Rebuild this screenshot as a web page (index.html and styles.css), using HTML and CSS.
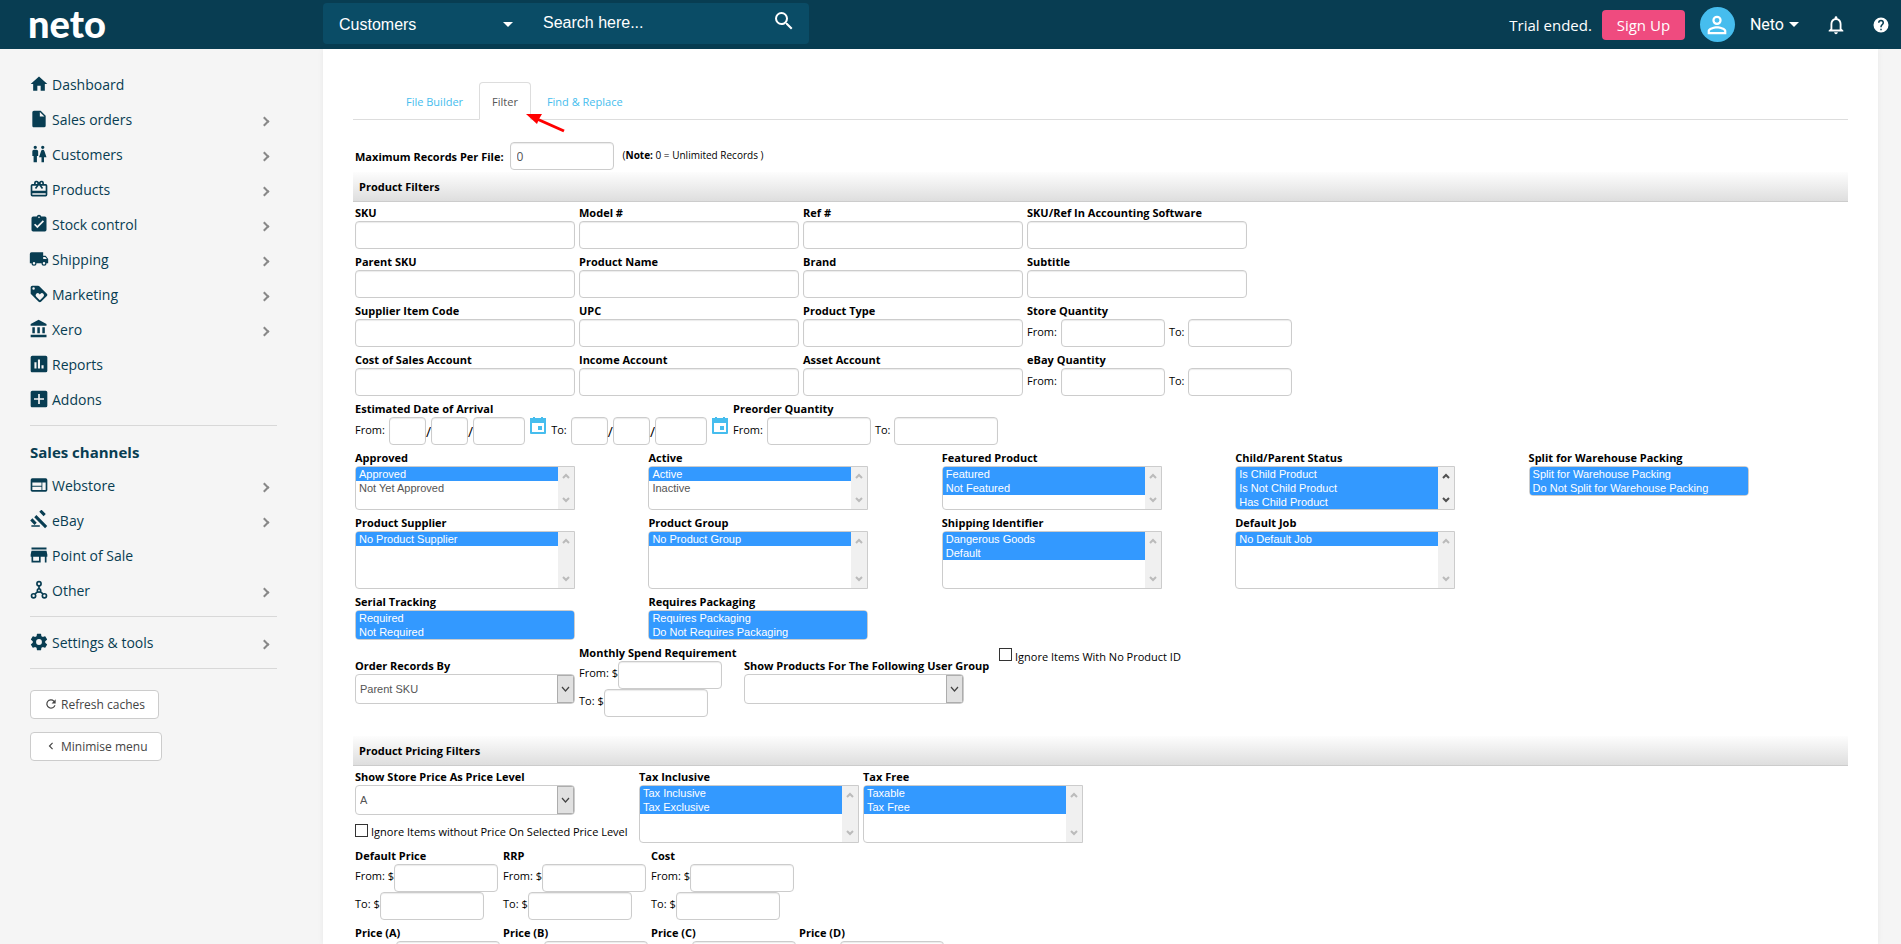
FILE: index.html
```
<!DOCTYPE html>
<html lang="en">
<head>
  <meta charset="UTF-8">
  <title>Neto</title>
  <link rel="stylesheet" href="styles.css">
</head>
<body>
<div class="page">
  <header class="topbar">
    <a class="logo" href="#">neto</a>
    <form class="search">
      <select class="search-type" aria-label="Search in"><option>Customers</option></select>
      <input class="search-text" type="search" placeholder="Search here..." aria-label="Search">
      <button class="search-btn" type="button" aria-label="Search">
        <svg width="24" height="24" viewBox="0 0 24 24"><path d="M15.5 14h-.79l-.28-.27A6.47 6.47 0 0 0 16 9.5 6.5 6.5 0 1 0 9.5 16c1.61 0 3.09-.59 4.23-1.57l.27.28v.79l5 4.99L20.49 19l-4.99-5zm-6 0C7.01 14 5 11.99 5 9.5S7.01 5 9.5 5 14 7.01 14 9.5 11.99 14 9.5 14z"/></svg>
      </button>
    </form>
    <div class="account">
      <span class="trial">Trial ended.</span>
      <button class="signup" type="button">Sign Up</button>
      <span class="avatar"><svg width="28" height="28" viewBox="0 0 24 24"><path d="M12 5.900a2.100 2.100 0 1 1 0 4.200 2.100 2.100 0 0 1 0-4.200m0 9c2.970 0 6.100 1.460 6.100 2.100v1.100H5.900V17c0-.64 3.130-2.100 6.100-2.100M12 4a4 4 0 1 0 0 8 4 4 0 0 0 0-8zm0 9c-2.670 0-8 1.340-8 4v3h16v-3c0-2.660-5.330-4-8-4z"/></svg></span>
      <button class="user" type="button">Neto <span class="caret"></span></button>
      <button class="icon-btn bell" type="button" aria-label="Notifications"><svg width="22" height="22" viewBox="0 0 24 24"><path d="M12 22c1.100 0 2-.9 2-2h-4c0 1.100.9 2 2 2zm6-6v-5c0-3.070-1.630-5.640-4.500-6.320V4a1.500 1.500 0 0 0-3 0v.68C7.640 5.360 6 7.920 6 11v5l-2 2v1h16v-1l-2-2zm-2 1H8v-6c0-2.480 1.510-4.500 4-4.500s4 2.020 4 4.500v6z"/></svg></button>
      <button class="icon-btn" type="button" aria-label="Help"><svg width="18" height="18" viewBox="0 0 24 24"><path d="M12 2a10 10 0 1 0 0 20 10 10 0 0 0 0-20zm1 17h-2v-2h2v2zm2.070-7.750-.9.92C13.450 12.900 13 13.500 13 15h-2v-.5c0-1.100.45-2.100 1.170-2.830l1.240-1.260c.37-.36.59-.86.59-1.410a2 2 0 0 0-4 0H8a4 4 0 0 1 8 0c0 .88-.36 1.680-.93 2.250z"/></svg></button>
    </div>
  </header>

  <div class="body">
    <nav class="sidebar">
      <a class="item" href="#"><svg viewBox="0 0 24 24"><path d="M10 20v-6h4v6h5v-8h3L12 3 2 12h3v8z"/></svg>Dashboard</a>
      <a class="item more" href="#"><svg viewBox="0 0 24 24"><path d="M6 2a2 2 0 0 0-2 2v16c0 1.100.9 2 2 2h12a2 2 0 0 0 2-2V8l-6-6H6zm7 7V3.500L18.500 9H13z"/></svg>Sales orders</a>
      <a class="item more" href="#"><svg viewBox="0 0 24 24"><path d="M5.500 22v-7.500H4V9c0-1.100.9-2 2-2h3c1.100 0 2 .9 2 2v5.500H9.500V22h-4zM18 22v-6h3l-2.540-7.630A2.010 2.010 0 0 0 16.560 7h-.12a2 2 0 0 0-1.900 1.370L12 16h3v6h3zM7.500 6a2 2 0 1 0 0-4 2 2 0 0 0 0 4zm9 0a2 2 0 1 0 0-4 2 2 0 0 0 0 4z"/></svg>Customers</a>
      <a class="item more" href="#"><svg viewBox="0 0 24 24"><path d="M20 6h-2.180c.11-.31.18-.65.18-1a3 3 0 0 0-5.500-1.650l-.5.67-.5-.68A3 3 0 0 0 6 5c0 .35.070.69.180 1H4a2 2 0 0 0-1.990 2L2 19a2 2 0 0 0 2 2h16a2 2 0 0 0 2-2V8a2 2 0 0 0-2-2zm-5-2a1 1 0 1 1 0 2 1 1 0 0 1 0-2zM9 4a1 1 0 1 1 0 2 1 1 0 0 1 0-2zm11 15H4v-2h16v2zm0-5H4V8h5.080L7 10.830 8.620 12 11 8.760l1-1.360 1 1.360L15.380 12 17 10.830 14.920 8H20v6z"/></svg>Products</a>
      <a class="item more" href="#"><svg viewBox="0 0 24 24"><path d="M19 3h-4.180a3 3 0 0 0-5.640 0H5a2 2 0 0 0-2 2v14c0 1.100.9 2 2 2h14a2 2 0 0 0 2-2V5a2 2 0 0 0-2-2zm-7 0a1 1 0 1 1 0 2 1 1 0 0 1 0-2zm-2 14-4-4 1.410-1.410L10 14.170l6.590-6.590L18 9l-8 8z"/></svg>Stock control</a>
      <a class="item more" href="#"><svg viewBox="0 0 24 24"><path d="M20 8h-3V4H3a2 2 0 0 0-2 2v11h2a3 3 0 0 0 6 0h6a3 3 0 0 0 6 0h2v-5l-3-4zM6 18.500a1.500 1.500 0 1 1 0-3 1.500 1.500 0 0 1 0 3zm13.500-9 1.960 2.500H17V9.500h2.500zm-1.500 9a1.500 1.500 0 1 1 0-3 1.500 1.500 0 0 1 0 3z"/></svg>Shipping</a>
      <a class="item more" href="#"><svg viewBox="0 0 24 24"><path d="m21.410 11.580-9-9A2 2 0 0 0 11 2H4a2 2 0 0 0-2 2v7c0 .55.220 1.050.590 1.420l9 9c.36.36.86.58 1.410.58s1.050-.22 1.410-.59l7-7c.37-.36.59-.86.59-1.410s-.23-1.060-.59-1.420zM5.500 7a1.500 1.500 0 1 1 0-3 1.500 1.500 0 0 1 0 3zm11.770 8.270L13 19.540l-4.270-4.270a2.500 2.500 0 0 1 3.540-3.540l.73.740.73-.73a2.500 2.500 0 0 1 3.540 3.530z"/></svg>Marketing</a>
      <a class="item more" href="#"><svg viewBox="0 0 24 24"><path d="M4 10v7h3v-7H4zm6 0v7h3v-7h-3zM2 22h19v-3H2v3zm14-12v7h3v-7h-3zm-4.500-9L2 6v2h19V6l-9.500-5z"/></svg>Xero</a>
      <a class="item" href="#"><svg viewBox="0 0 24 24"><path d="M20 2H4a2 2 0 0 0-2 2v16c0 1.100.9 2 2 2h16a2 2 0 0 0 2-2V4a2 2 0 0 0-2-2zM9 17.500H6.500V10H9v7.500zm4.200 0h-2.500V6.500h2.500v11zm4.300 0H15v-4h2.500v4z"/></svg>Reports</a>
      <a class="item" href="#"><svg viewBox="0 0 24 24"><path d="M20 2H4a2 2 0 0 0-2 2v16c0 1.100.9 2 2 2h16a2 2 0 0 0 2-2V4a2 2 0 0 0-2-2zm-2 11h-5v5h-2v-5H6v-2h5V6h2v5h5v2z"/></svg>Addons</a>
      <hr>
      <h2>Sales channels</h2>
      <a class="item more" href="#"><svg viewBox="0 0 24 24"><path d="M20 4H4a2 2 0 0 0-1.990 2L2 18c0 1.100.9 2 2 2h16a2 2 0 0 0 2-2V6a2 2 0 0 0-2-2zm-5 14H4v-4h11v4zm0-5H4V9h11v4zm5 5h-4V9h4v9z"/></svg>Webstore</a>
      <a class="item more" href="#"><svg viewBox="0 0 24 24"><path d="M2 21h11v2H2zM5.740 10.600l2.830-2.830L22.700 21.920l-2.830 2.830zM12.310 3.510l2.830-2.830 5.660 5.660-2.830 2.830zM3.330 12l5.660 5.660-2.830 2.830L.5 14.830z" transform="translate(1 -1) scale(.92)"/></svg>eBay</a>
      <a class="item" href="#"><svg viewBox="0 0 24 24"><path d="M21 3H3v2.500h18V3zm1 11v-2.500L21 7H3l-1 4.500V14h1v7h11v-7h5v7h2v-7h1zm-10 5H5v-5h7v5z"/></svg>Point of Sale</a>
      <a class="item more" href="#"><svg viewBox="0 0 24 24"><g fill="none" stroke="#083d52" stroke-width="2"><circle cx="12" cy="4.500" r="2.500"/><circle cx="5.500" cy="19" r="2.500"/><circle cx="18.500" cy="19" r="2.500"/><circle cx="12" cy="12.500" r="2"/><path d="M12 7v4M10.500 14l-3.500 3M13.500 14l3.500 3"/></g></svg>Other</a>
      <hr>
      <a class="item more" href="#"><svg viewBox="0 0 24 24"><path d="M19.430 12.980c.040-.32.070-.64.070-.98s-.03-.66-.07-.98l2.110-1.650c.19-.15.24-.42.120-.64l-2-3.460a.5.500 0 0 0-.61-.22l-2.490 1a7.300 7.300 0 0 0-1.690-.98l-.38-2.650A.49.490 0 0 0 14 2h-4a.49.490 0 0 0-.49.420l-.38 2.650c-.61.250-1.170.59-1.690.98l-2.490-1a.5.500 0 0 0-.61.220l-2 3.460c-.13.220-.07.490.120.640l2.110 1.650c-.04.320-.07.650-.07.980s.030.660.070.980l-2.110 1.650a.5.500 0 0 0-.12.640l2 3.460c.12.220.390.300.610.220l2.490-1c.52.400 1.080.730 1.690.980l.38 2.650c.030.240.240.420.490.420h4c.25 0 .46-.18.490-.42l.38-2.650a7.700 7.700 0 0 0 1.690-.98l2.490 1c.23.090.49 0 .61-.22l2-3.460a.5.500 0 0 0-.12-.64l-2.110-1.650zM12 15.500a3.500 3.500 0 1 1 0-7 3.500 3.500 0 0 1 0 7z"/></svg>Settings &amp; tools</a>
      <hr>
      <button class="side-btn" type="button"><svg viewBox="0 0 24 24"><path d="M17.650 6.350A8 8 0 1 0 19.730 14h-2.080A6 6 0 1 1 12 6c1.660 0 3.140.69 4.220 1.780L13 11h7V4l-2.350 2.350z"/></svg>Refresh caches</button>
      <button class="side-btn" type="button"><svg viewBox="0 0 24 24"><path d="M15.410 7.410 14 6l-6 6 6 6 1.410-1.410L10.830 12z"/></svg>Minimise menu</button>
    </nav>

    <main class="content">
      <ul class="tabs">
        <li><a href="#">File Builder</a></li>
        <li><a class="active" href="#">Filter</a></li>
        <li><a href="#">Find &amp; Replace</a></li>
      </ul>
      <svg class="pointer" width="40" height="20" viewBox="0 0 40 20"><path d="M11 5 38 17" stroke="#f00" stroke-width="3"/><path d="M0 0h16l-3 5-2 5z" fill="#f00"/></svg>

      <div class="max-row">
        <label class="bold" for="max">Maximum Records Per File:</label>
        <input id="max" class="num" type="text" value="0">
        <small>(<b>Note:</b> 0 = Unlimited Records )</small>
      </div>

      <h3 class="bar">Product Filters</h3>
      <div class="rows">
        <div class="text-grid">
          <div class="field"><label for="sku">SKU</label><input id="sku" type="text"></div>
          <div class="field"><label for="model">Model #</label><input id="model" type="text"></div>
          <div class="field"><label for="ref">Ref #</label><input id="ref" type="text"></div>
          <div class="field"><label for="acc">SKU/Ref In Accounting Software</label><input id="acc" type="text"></div>
          <div class="field"><label for="parent">Parent SKU</label><input id="parent" type="text"></div>
          <div class="field"><label for="name">Product Name</label><input id="name" type="text"></div>
          <div class="field"><label for="brand">Brand</label><input id="brand" type="text"></div>
          <div class="field"><label for="subtitle">Subtitle</label><input id="subtitle" type="text"></div>
          <div class="field"><label for="supcode">Supplier Item Code</label><input id="supcode" type="text"></div>
          <div class="field"><label for="upc">UPC</label><input id="upc" type="text"></div>
          <div class="field"><label for="type">Product Type</label><input id="type" type="text"></div>
          <div class="field"><label for="storeq">Store Quantity</label>
            <div class="range"><label for="storeq">From:</label><input id="storeq" class="num" type="text"><label for="storeq2">To:</label><input id="storeq2" class="num" type="text"></div>
          </div>
          <div class="field"><label for="cos">Cost of Sales Account</label><input id="cos" type="text"></div>
          <div class="field"><label for="income">Income Account</label><input id="income" type="text"></div>
          <div class="field"><label for="asset">Asset Account</label><input id="asset" type="text"></div>
          <div class="field"><label for="ebayq">eBay Quantity</label>
            <div class="range"><label for="ebayq">From:</label><input id="ebayq" class="num" type="text"><label for="ebayq2">To:</label><input id="ebayq2" class="num" type="text"></div>
          </div>
        </div>

        <div class="line">
          <div class="field"><label for="eta">Estimated Date of Arrival</label>
            <div class="range">
              <label for="eta">From:</label>
              <span class="date"><input id="eta" class="dd" type="text">/<input class="dd" type="text" aria-label="Month">/<input class="yy" type="text" aria-label="Year"></span>
              <button class="cal" type="button" aria-label="Pick date"><svg viewBox="0 0 16 18"><path d="M3 0h2v1h6V0h2v1h3v15a1 1 0 0 1-1 1H1a1 1 0 0 1-1-1V1h3zM2 6v9h12V6z"/><path d="M8 9h4v4H8z"/></svg></button>
              <label for="eta2">To:</label>
              <span class="date"><input id="eta2" class="dd" type="text">/<input class="dd" type="text" aria-label="Month">/<input class="yy" type="text" aria-label="Year"></span>
              <button class="cal" type="button" aria-label="Pick date"><svg viewBox="0 0 16 18"><path d="M3 0h2v1h6V0h2v1h3v15a1 1 0 0 1-1 1H1a1 1 0 0 1-1-1V1h3zM2 6v9h12V6z"/><path d="M8 9h4v4H8z"/></svg></button>
            </div>
          </div>
          <div class="field"><label for="preq">Preorder Quantity</label>
            <div class="range"><label for="preq">From:</label><input id="preq" class="num" type="text"><label for="preq2">To:</label><input id="preq2" class="num" type="text"></div>
          </div>
        </div>

        <div class="list-grid">
          <div class="field"><label for="approved">Approved</label><select id="approved" class="h3" multiple><option selected>Approved</option><option>Not Yet Approved</option></select></div>
          <div class="field"><label for="active">Active</label><select id="active" class="h3" multiple><option selected>Active</option><option>Inactive</option></select></div>
          <div class="field"><label for="featured">Featured Product</label><select id="featured" class="h3" multiple><option selected>Featured</option><option selected>Not Featured</option></select></div>
          <div class="field"><label for="child">Child/Parent Status</label><select id="child" class="h3 full" multiple><option selected>Is Child Product</option><option selected>Is Not Child Product</option><option selected>Has Child Product</option></select></div>
          <div class="field"><label for="split">Split for Warehouse Packing</label><select id="split" class="h2" multiple><option selected>Split for Warehouse Packing</option><option selected>Do Not Split for Warehouse Packing</option></select></div>
        </div>
        <div class="list-grid">
          <div class="field"><label for="supplier">Product Supplier</label><select id="supplier" class="h4" multiple><option selected>No Product Supplier</option></select></div>
          <div class="field"><label for="group">Product Group</label><select id="group" class="h4" multiple><option selected>No Product Group</option></select></div>
          <div class="field"><label for="shipid">Shipping Identifier</label><select id="shipid" class="h4" multiple><option selected>Dangerous Goods</option><option selected>Default</option></select></div>
          <div class="field"><label for="job">Default Job</label><select id="job" class="h4" multiple><option selected>No Default Job</option></select></div>
        </div>
        <div class="list-grid">
          <div class="field"><label for="serial">Serial Tracking</label><select id="serial" class="h2" multiple><option selected>Required</option><option selected>Not Required</option></select></div>
          <div class="field"><label for="pack">Requires Packaging</label><select id="pack" class="h2" multiple><option selected>Requires Packaging</option><option selected>Do Not Requires Packaging</option></select></div>
        </div>

        <div class="line middle">
          <div class="field"><label for="order">Order Records By</label><select id="order" class="drop"><option>Parent SKU</option></select></div>
          <div class="field spend"><label for="spend">Monthly Spend Requirement</label>
            <div class="money"><label for="spend">From: $</label><input id="spend" class="num" type="text"></div>
            <div class="money"><label for="spend2">To: $</label><input id="spend2" class="num" type="text"></div>
          </div>
          <div class="field usergroup"><label for="ugroup">Show Products For The Following User Group</label><select id="ugroup" class="drop"><option></option></select></div>
          <label class="check top"><input type="checkbox">Ignore Items With No Product ID</label>
        </div>
      </div>

      <h3 class="bar second">Product Pricing Filters</h3>
      <div class="rows">
        <div class="line">
          <div class="field level"><label for="level">Show Store Price As Price Level</label><select id="level" class="drop"><option>A</option></select>
            <label class="check"><input type="checkbox">Ignore Items without Price On Selected Price Level</label>
          </div>
          <div class="field"><label for="taxinc">Tax Inclusive</label><select id="taxinc" class="h4" multiple><option selected>Tax Inclusive</option><option selected>Tax Exclusive</option></select></div>
          <div class="field"><label for="taxfree">Tax Free</label><select id="taxfree" class="h4" multiple><option selected>Taxable</option><option selected>Tax Free</option></select></div>
        </div>
        <div class="price-grid">
          <div class="field"><label for="dp">Default Price</label>
            <div class="money"><label for="dp">From: $</label><input id="dp" class="num" type="text"></div>
            <div class="money"><label for="dp2">To: $</label><input id="dp2" class="num" type="text"></div></div>
          <div class="field"><label for="rrp">RRP</label>
            <div class="money"><label for="rrp">From: $</label><input id="rrp" class="num" type="text"></div>
            <div class="money"><label for="rrp2">To: $</label><input id="rrp2" class="num" type="text"></div></div>
          <div class="field"><label for="cost">Cost</label>
            <div class="money"><label for="cost">From: $</label><input id="cost" class="num" type="text"></div>
            <div class="money"><label for="cost2">To: $</label><input id="cost2" class="num" type="text"></div></div>
        </div>
        <div class="price-grid">
          <div class="field"><label for="pa">Price (A)</label><div class="money"><input id="pa" class="num" type="text"></div></div>
          <div class="field"><label for="pb">Price (B)</label><div class="money"><input id="pb" class="num" type="text"></div></div>
          <div class="field"><label for="pc">Price (C)</label><div class="money"><input id="pc" class="num" type="text"></div></div>
          <div class="field"><label for="pd">Price (D)</label><div class="money"><input id="pd" class="num" type="text"></div></div>
        </div>
      </div>
    </main>
  </div>
</div>
</body>
</html>
```
FILE: styles.css
```
* {
  box-sizing: border-box;
}
body {
  margin: 0;
  font-family: "Open Sans", "Noto Sans", sans-serif;
  font-size: 11px;
  color: #000;
  background: #f5f5f5;
}
a {
  text-decoration: none;
}
button {
  font-family: inherit;
  cursor: pointer;
}
.page {
  display: flex;
  flex-direction: column;
  height: 100vh;
  overflow: hidden;
}

/* top bar */
.topbar {
  display: flex;
  flex: none;
  height: 49px;
  background: #083d52;
  color: #fff;
}
.topbar svg {
  fill: #fff;
  display: block;
}
.logo {
  width: 323px;
  padding-left: 28px;
  font: 900 38px/46px Lato, sans-serif;
  color: #fff;
}
.search {
  display: flex;
  width: 486px;
  height: 41px;
  margin-top: 3px;
  background: #0a4c66;
  border-radius: 4px;
}
.search-type,
.search-text {
  appearance: none;
  font: 16px "Liberation Sans", Arial, sans-serif;
  color: #fff;
  background: none;
  border: 0;
  outline: 0;
}
.search-type {
  width: 207px;
  padding: 2px 16px 0;
  background: url("data:image/svg+xml,%3Csvg xmlns='http://www.w3.org/2000/svg' width='10' height='5'%3E%3Cpath d='M0 0h10L5 5z' fill='white'/%3E%3C/svg%3E") no-repeat 180px 19px;
}
.search-text {
  flex: 1;
  min-width: 0;
  padding: 0 13px 2px;
}
.search-text::placeholder {
  color: #fff;
}
.search-btn,
.icon-btn,
.user {
  padding: 0;
  border: 0;
  background: none;
  color: #fff;
}
.search-btn {
  width: 37px;
  padding-bottom: 6px;
}
.account {
  display: flex;
  align-items: center;
  margin-left: auto;
  padding-right: 11px;
}
.trial,
.signup {
  font-size: 15px;
}
.signup {
  width: 83px;
  height: 30px;
  margin: 0 15px 0 10px;
  padding: 0;
  color: #fff;
  background: #ef4b7f;
  border: 0;
  border-radius: 4px;
}
.avatar {
  display: flex;
  align-items: center;
  justify-content: center;
  width: 35px;
  height: 35px;
  border-radius: 50%;
  background: #46bdee;
}
.user {
  display: flex;
  align-items: center;
  gap: 5px;
  margin: 0 26px 0 15px;
  font: 16px Roboto, sans-serif;
}
.caret {
  border: 5px solid transparent;
  border-top-color: #fff;
  border-bottom: 0;
}
.bell {
  margin-right: 25px;
}

/* side menu */
.body {
  display: flex;
  flex: 1;
  min-height: 0;
}
.sidebar {
  flex: none;
  width: 323px;
  padding: 18px 46px 0 30px;
}
.item {
  display: flex;
  align-items: center;
  gap: 3px;
  height: 35px;
  margin-left: -1px;
  font-size: 14px;
  color: #083d52;
}
.item svg {
  width: 20px;
  height: 20px;
  margin-bottom: 2px;
  fill: #083d52;
}
.more::after {
  content: "";
  width: 7px;
  height: 7px;
  margin: 3px 9px 0 auto;
  border: solid #888;
  border-width: 2px 2px 0 0;
  transform: rotate(45deg);
  box-sizing: border-box;
}
.sidebar hr {
  margin: 8px 0;
  border: 0;
  border-top: 1px solid #d8d8d8;
}
.sidebar h2 {
  margin: 0;
  padding: 4px 0 2px;
  font-size: 15px;
  line-height: 28px;
  color: #083d52;
}
.side-btn {
  display: flex;
  align-items: center;
  gap: 3px;
  height: 29px;
  margin: 21px 0 -8px;
  padding: 0 13px;
  font-size: 12px;
  color: #444;
  background: #fff;
  border: 1px solid #ccc;
  border-radius: 4px;
}
.side-btn svg {
  width: 14px;
  height: 14px;
  margin-bottom: 2px;
  fill: #444;
}

/* page content */
.content {
  position: relative;
  flex: 1;
  min-width: 0;
  margin-right: 23px;
  padding: 33px 30px 0;
  background: #fff;
  box-shadow: 0 0 6px rgba(0, 0, 0, 0.06);
}
.tabs {
  display: flex;
  gap: 3px;
  margin: 0 0 22px;
  padding: 0 0 0 40px;
  list-style: none;
  border-bottom: 1px solid #ddd;
}
.tabs a {
  display: block;
  height: 38px;
  margin-bottom: -1px;
  padding: 0 12px;
  line-height: 38px;
  color: #46bdee;
  border: 1px solid transparent;
  border-radius: 4px 4px 0 0;
}
.tabs a.active {
  color: #555;
  background: #fff;
  border-color: #ddd #ddd #fff;
}
.pointer {
  position: absolute;
  left: 203px;
  top: 65px;
}
.content input[type="text"] {
  width: 220px;
  height: 28px;
  padding: 0 6px;
  font: 12px "Open Sans", sans-serif;
  color: #555;
  background: #fff;
  border: 1px solid #ccc;
  border-radius: 4px;
  outline: 0;
  box-shadow: inset 0 1px 1px rgba(0, 0, 0, 0.08);
}
.content input.num {
  width: 104px;
}
.content input.dd {
  width: 37px;
}
.content input.yy {
  width: 52px;
}
.max-row {
  display: flex;
  align-items: center;
  gap: 6px;
  margin-bottom: 2px;
  padding-left: 2px;
}
.max-row small {
  padding: 0 0 2px 3px;
  font-size: 10px;
}
.bold,
.field > label {
  font-weight: bold;
}
.bar {
  height: 30px;
  margin: 0;
  padding-left: 6px;
  font-size: 11px;
  line-height: 29px;
  background: linear-gradient(#fdfdfd, #dedede);
  border-bottom: 1px solid #ccc;
}
.bar.second {
  margin-top: 19px;
}
.rows {
  display: flex;
  flex-direction: column;
  gap: 3px;
  padding: 1px 0 0 2px;
}
.field > label {
  display: block;
  padding-top: 2px;
  line-height: 16px;
  white-space: nowrap;
}
.field > input,
.field > select {
  display: block;
}
.text-grid {
  display: grid;
  grid-template-columns: 220px 220px 220px auto;
  gap: 3px 4px;
}
.line {
  display: flex;
  gap: 4px;
}
.range {
  display: flex;
  align-items: center;
  gap: 4px;
}
.range label {
  padding-bottom: 4px;
}
.date {
  display: flex;
  align-items: center;
  font-size: 14px;
}
.cal {
  align-self: flex-start;
  width: 18px;
  height: 18px;
  padding: 0 1px;
  border: 0;
  background: none;
}
.cal svg {
  display: block;
  width: 16px;
  height: 18px;
  fill: #46bdee;
  fill-rule: evenodd;
}
.list-grid {
  display: grid;
  grid-template-columns: repeat(5, 1fr);
  padding-right: 26px;
}

/* list boxes, with the scroll track painted down the right side */
select[multiple] {
  width: 220px;
  padding: 0 16px 0 0;
  font: 11px "Liberation Sans", Arial, sans-serif;
  color: #555;
  background-color: #fff;
  background-image:
    url("data:image/svg+xml,%3Csvg xmlns='http://www.w3.org/2000/svg' width='8' height='6'%3E%3Cpath d='M1 5l3-3 3 3' fill='none' stroke='%23bbb' stroke-width='2'/%3E%3C/svg%3E"),
    url("data:image/svg+xml,%3Csvg xmlns='http://www.w3.org/2000/svg' width='8' height='6'%3E%3Cpath d='M1 1l3 3 3-3' fill='none' stroke='%23bbb' stroke-width='2'/%3E%3C/svg%3E"),
    linear-gradient(#f0f0f0, #f0f0f0);
  background-position: right 4px top 6px, right 4px bottom 6px, right top;
  background-size: 8px 6px, 8px 6px, 16px 100%;
  background-repeat: no-repeat;
  border: 1px solid #ccc;
  border-radius: 4px 0 0 4px;
  outline: 0;
  scrollbar-width: none;
}
select[multiple].full {
  background-image:
    url("data:image/svg+xml,%3Csvg xmlns='http://www.w3.org/2000/svg' width='8' height='6'%3E%3Cpath d='M1 5l3-3 3 3' fill='none' stroke='%23505050' stroke-width='2'/%3E%3C/svg%3E"),
    url("data:image/svg+xml,%3Csvg xmlns='http://www.w3.org/2000/svg' width='8' height='6'%3E%3Cpath d='M1 1l3 3 3-3' fill='none' stroke='%23505050' stroke-width='2'/%3E%3C/svg%3E"),
    linear-gradient(#f0f0f0, #f0f0f0);
}
select[multiple] option {
  height: 14px;
  min-height: 14px;
  padding: 1px 3px 0;
  line-height: 13px;
}
select[multiple] option:checked {
  color: #fff;
  -webkit-text-fill-color: #fff;
  background: #39f linear-gradient(#39f, #39f);
}
select[multiple].h2 {
  height: 30px;
  padding: 0;
  border-radius: 4px;
}
select.h3 {
  height: 44px;
}
select.h4 {
  height: 58px;
}

/* drop-downs and money ranges */
.drop {
  appearance: none;
  width: 220px;
  height: 30px;
  padding: 0 22px 0 4px;
  font: 11px "Liberation Sans", Arial, sans-serif;
  color: #555;
  background: #fff url("data:image/svg+xml,%3Csvg xmlns='http://www.w3.org/2000/svg' width='17' height='28'%3E%3Crect x='.5' y='.5' width='16' height='27' fill='%23e1e1e1' stroke='%23adadad'/%3E%3Cpath d='M5 12l3.500 4 3.500-4' fill='none' stroke='%23444' stroke-width='1.200'/%3E%3C/svg%3E") no-repeat right center;
  border: 1px solid #ccc;
  border-radius: 4px;
  outline: 0;
}
.middle {
  align-items: center;
}
.spend {
  width: 161px;
}
.usergroup {
  width: 251px;
}
.money {
  display: flex;
}
.money label {
  line-height: 24px;
}
.check {
  display: flex;
  align-items: center;
  gap: 3px;
  white-space: nowrap;
}
.check input {
  appearance: none;
  width: 13px;
  height: 13px;
  margin: 0 0 3px;
  background: #fff;
  border: 1px solid #333;
}
.check.top {
  align-self: flex-start;
  margin-top: 5px;
}
.level {
  width: 280px;
}
.field > .check {
  display: flex;
  margin-top: 7px;
  font-weight: normal;
}
.price-grid {
  display: grid;
  grid-template-columns: repeat(4, 144px);
  gap: 4px;
}
.price-grid .money > input:first-child {
  margin-left: 41px;
}
```
